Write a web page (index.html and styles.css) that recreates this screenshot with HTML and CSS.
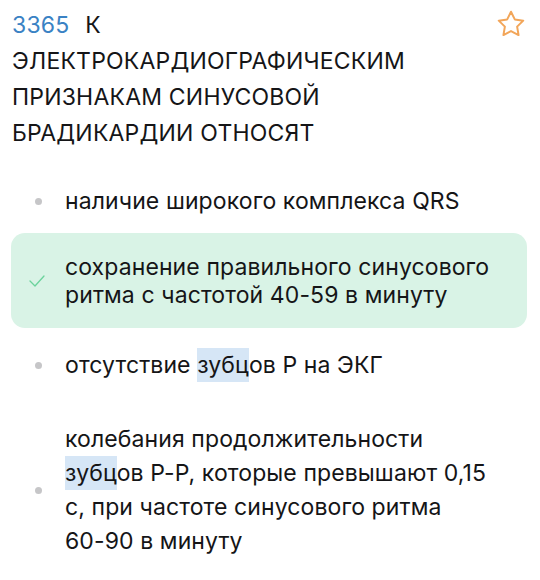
FILE: index.html
```html
<!DOCTYPE html>
<html lang="ru">
<head>
<meta charset="utf-8">
<title>Вопрос 3365</title>
<link rel="stylesheet" href="styles.css">
</head>
<body>
<div class="question">
  <div class="question-head">
    <h1 class="question-title"><span class="question-num">3365</span> К<br>ЭЛЕКТРОКАРДИОГРАФИЧЕСКИМ<br>ПРИЗНАКАМ СИНУСОВОЙ<br>БРАДИКАРДИИ ОТНОСЯТ</h1>
    <svg class="star" viewBox="0 0 24 24" width="30" height="30" aria-hidden="true">
      <path d="M12 2.2l3.03 6.14 6.77.98-4.9 4.78 1.16 6.75L12 17.66l-6.06 3.19 1.16-6.75-4.9-4.78 6.77-.98z" fill="none" stroke="#f2a65a" stroke-width="1.6" stroke-linejoin="round"/>
    </svg>
  </div>
  <ul class="options">
    <li class="option option-first"><span class="marker"><span class="dot"></span></span><span class="option-text">наличие широкого комплекса QRS</span></li>
    <li class="option option-correct"><span class="marker"><svg class="check" viewBox="0 0 16 12" width="16" height="12" aria-hidden="true"><path d="M1 6l5 5 9-10" fill="none" stroke="#6bd39c" stroke-width="1.3" stroke-linecap="round" stroke-linejoin="round"/></svg></span><span class="option-text">сохранение правильного синусового<br>ритма с частотой 40-59 в минуту</span></li>
    <li class="option option-third"><span class="marker"><span class="dot"></span></span><span class="option-text">отсутствие <span class="mark">зубц</span>ов Р на ЭКГ</span></li>
    <li class="option option-last"><span class="marker"><span class="dot"></span></span><span class="option-text">колебания продолжительности<br><span class="mark">зубц</span>ов Р-Р, которые превышают 0,15<br>с, при частоте синусового ритма<br>60-90 в минуту</span></li>
  </ul>
</div>
</body>
</html>
```

FILE: styles.css
```css
html, body {
  margin: 0;
  padding: 0;
  background: #ffffff;
}

body {
  font-family: Inter, "Noto Sans", "Liberation Sans", sans-serif;
  color: #151517;
  width: 540px;
  height: 580px;
  overflow: hidden;
}

.question-head {
  display: flex;
  justify-content: space-between;
  align-items: flex-start;
  padding: 7px 14px 0 12px;
}

.question-title {
  margin: 0;
  font-size: 23px;
  font-weight: 400;
  line-height: 36px;
  letter-spacing: 0.2px;
}

.question-num {
  color: #3a82c4;
  margin-right: 9px;
}

.star {
  flex: none;
  margin-top: 2px;
  display: block;
}

.options {
  list-style: none;
  margin: 33px 13px 0 11px;
  padding: 0;
}

.option {
  display: flex;
  align-items: center;
  font-size: 23px;
  line-height: 34px;
}

.option-text {
  letter-spacing: 0.1px;
}

.marker {
  flex: none;
  width: 54px;
  display: flex;
  justify-content: center;
  align-items: center;
}

.dot {
  width: 7px;
  height: 7px;
  border-radius: 50%;
  background: #c6c6c8;
}

.check {
  display: block;
  margin-left: -2px;
}

.option-correct {
  margin-top: 15px;
  background: #d9f3e6;
  border-radius: 14px;
  padding: 20px 0 19px;
  line-height: 28px;
}

.option-third {
  margin-top: 20px;
}

.option-last {
  margin-top: 40px;
}

.mark {
  display: inline-block;
  background: #d6e6f6;
}
```
